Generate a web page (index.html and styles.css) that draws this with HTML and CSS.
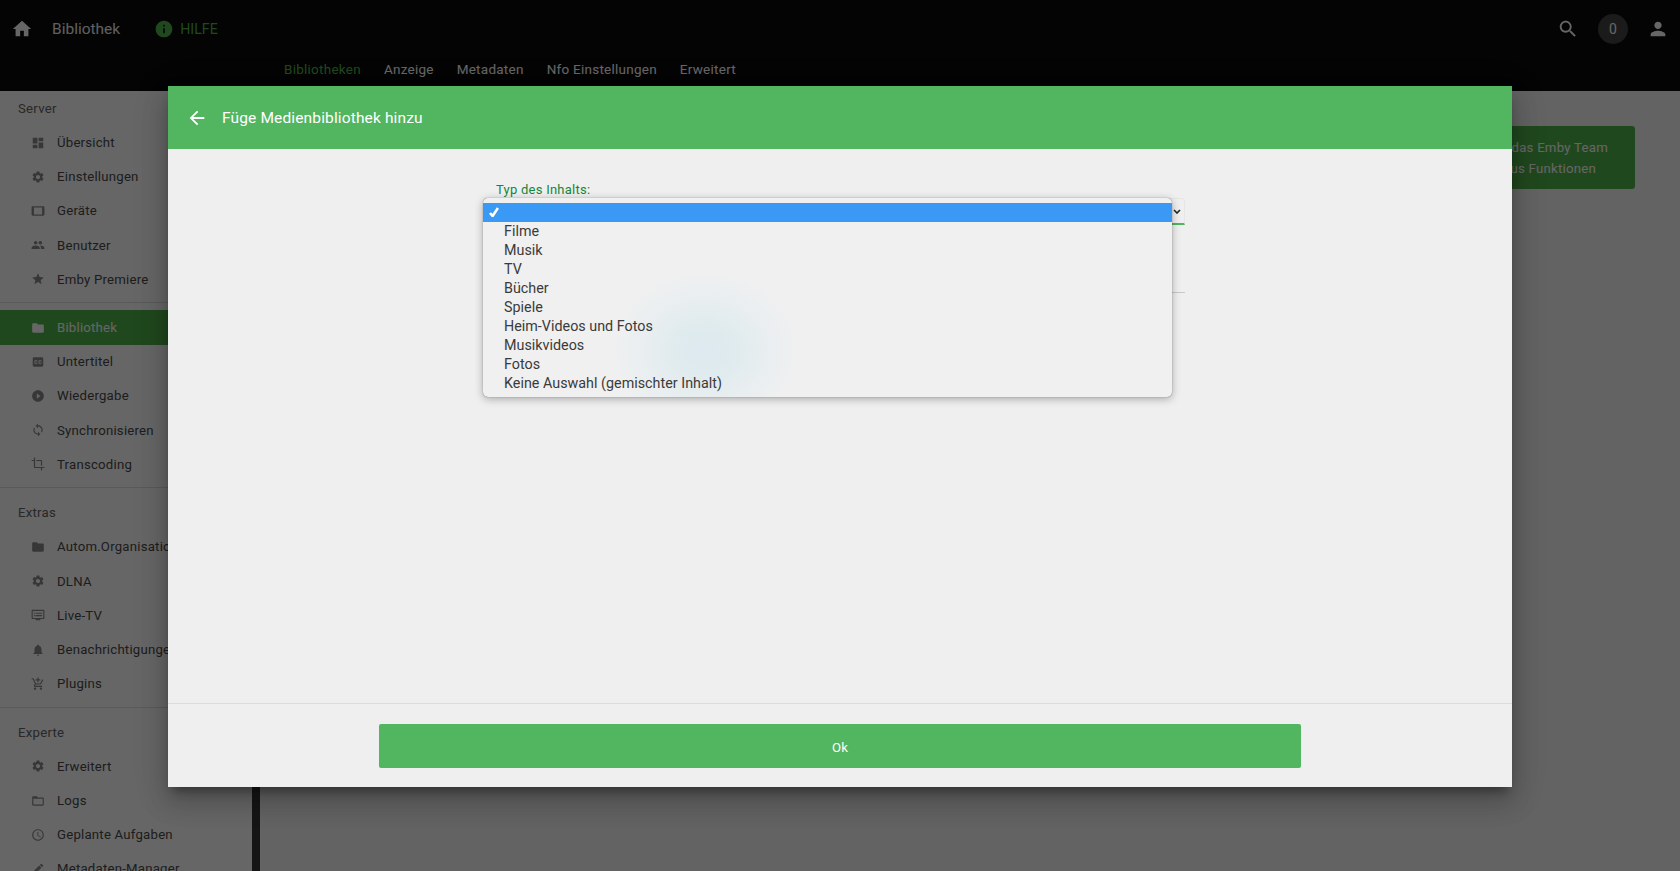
FILE: index.html
```html
<!DOCTYPE html>
<html lang="de">
<head>
<meta charset="utf-8">
<title>Bibliothek</title>
<link rel="stylesheet" href="styles.css">
</head>
<body>
<div class="app">
  <header class="topbar">
    <div class="topbar-row">
      <svg class="top-icon home" viewBox="0 0 24 24"><path d="M10 20v-6h4v6h5v-8h3L12 3 2 12h3v8z"/></svg>
      <span class="top-title">Bibliothek</span>
      <svg class="top-icon info" viewBox="0 0 24 24"><path d="M12 2C6.48 2 2 6.48 2 12s4.48 10 10 10 10-4.48 10-10S17.52 2 12 2zm1 15h-2v-6h2v6zm0-8h-2V7h2v2z"/></svg>
      <span class="top-help">HILFE</span>
      <span class="top-spacer"></span>
      <svg class="top-icon search" viewBox="0 0 24 24"><path d="M15.5 14h-.79l-.28-.27C15.41 12.59 16 11.11 16 9.5 16 5.91 13.09 3 9.5 3S3 5.91 3 9.5 5.91 16 9.5 16c1.61 0 3.09-.59 4.23-1.57l.27.28v.79l5 4.99L20.49 19l-4.99-5zm-6 0C7.01 14 5 11.99 5 9.5S7.01 5 9.5 5 14 7.01 14 9.5 11.99 14 9.5 14z"/></svg>
      <span class="badge">0</span>
      <svg class="top-icon person" viewBox="0 0 24 24"><path d="M12 12c2.21 0 4-1.79 4-4s-1.79-4-4-4-4 1.79-4 4 1.79 4 4 4zm0 2c-2.67 0-8 1.34-8 4v2h16v-2c0-2.66-5.33-4-8-4z"/></svg>
    </div>
    <nav class="tabs">
      <span class="tab tab-active">Bibliotheken</span>
      <span class="tab">Anzeige</span>
      <span class="tab">Metadaten</span>
      <span class="tab">Nfo Einstellungen</span>
      <span class="tab">Erweitert</span>
    </nav>
  </header>

  <div class="main">
    <aside class="sidebar">
      <div class="side-title">Server</div>
      <div class="side-item"><svg viewBox="0 0 24 24"><path d="M3 13h8V3H3v10zm0 8h8v-6H3v6zm10 0h8V11h-8v10zm0-18v6h8V3h-8z"/></svg><span>Übersicht</span></div>
      <div class="side-item"><svg viewBox="0 0 24 24"><path d="M19.14 12.94c.04-.3.06-.61.06-.94 0-.32-.02-.64-.07-.94l2.03-1.58c.18-.14.23-.41.12-.61l-1.92-3.32c-.12-.22-.37-.29-.59-.22l-2.39.96c-.5-.38-1.03-.7-1.62-.94l-.36-2.54c-.04-.24-.24-.41-.48-.41h-3.84c-.24 0-.43.17-.47.41l-.36 2.54c-.59.24-1.13.57-1.62.94l-2.39-.96c-.22-.08-.47 0-.59.22L2.74 8.87c-.12.21-.08.47.12.61l2.03 1.58c-.05.3-.09.63-.09.94s.02.64.07.94l-2.03 1.58c-.18.14-.23.41-.12.61l1.92 3.32c.12.22.37.29.59.22l2.39-.96c.5.38 1.03.7 1.62.94l.36 2.54c.05.24.24.41.48.41h3.84c.24 0 .44-.17.47-.41l.36-2.54c.59-.24 1.13-.56 1.62-.94l2.39.96c.22.08.47 0 .59-.22l1.92-3.32c.12-.22.07-.47-.12-.61l-2.01-1.58zM12 15.6c-1.98 0-3.6-1.62-3.6-3.6s1.62-3.6 3.6-3.6 3.6 1.62 3.6 3.6-1.62 3.6-3.6 3.6z"/></svg><span>Einstellungen</span></div>
      <div class="side-item"><svg viewBox="0 0 24 24"><path d="M21 4H3c-1.1 0-2 .9-2 2v12c0 1.1.9 2 2 2h18c1.1 0 2-.9 2-2V6c0-1.1-.9-2-2-2zm-2 14H5V6h14v12z"/></svg><span>Geräte</span></div>
      <div class="side-item"><svg viewBox="0 0 24 24"><path d="M16 11c1.66 0 2.99-1.34 2.99-3S17.66 5 16 5c-1.66 0-3 1.34-3 3s1.34 3 3 3zm-8 0c1.66 0 2.99-1.34 2.99-3S9.66 5 8 5C6.34 5 5 6.34 5 8s1.34 3 3 3zm0 2c-2.33 0-7 1.17-7 3.5V19h14v-2.5c0-2.33-4.67-3.5-7-3.5zm8 0c-.29 0-.62.02-.97.05 1.16.84 1.97 1.97 1.97 3.45V19h6v-2.5c0-2.33-4.67-3.5-7-3.5z"/></svg><span>Benutzer</span></div>
      <div class="side-item"><svg viewBox="0 0 24 24"><path d="M12 17.27L18.18 21l-1.64-7.03L22 9.24l-7.19-.61L12 2 9.19 8.63 2 9.24l5.46 4.73L5.82 21z"/></svg><span>Emby Premiere</span></div>
      <div class="side-divider"></div>
      <div class="side-item side-item-active"><svg viewBox="0 0 24 24"><path d="M10 4H4c-1.1 0-1.99.9-1.99 2L2 18c0 1.1.9 2 2 2h16c1.1 0 2-.9 2-2V8c0-1.1-.9-2-2-2h-8l-2-2z"/></svg><span>Bibliothek</span></div>
      <div class="side-item"><svg viewBox="0 0 24 24"><path d="M19 4H5c-1.11 0-2 .9-2 2v12c0 1.1.89 2 2 2h14c1.1 0 2-.9 2-2V6c0-1.1-.9-2-2-2zm-8 7H9.5v-.5h-2v3h2V13H11v1c0 .55-.45 1-1 1H7c-.55 0-1-.45-1-1v-4c0-.55.45-1 1-1h3c.55 0 1 .45 1 1v1zm7 0h-1.5v-.5h-2v3h2V13H18v1c0 .55-.45 1-1 1h-3c-.55 0-1-.45-1-1v-4c0-.55.45-1 1-1h3c.55 0 1 .45 1 1v1z"/></svg><span>Untertitel</span></div>
      <div class="side-item"><svg viewBox="0 0 24 24"><path d="M12 2C6.48 2 2 6.48 2 12s4.48 10 10 10 10-4.48 10-10S17.52 2 12 2zm-2 14.5v-9l6 4.5-6 4.5z"/></svg><span>Wiedergabe</span></div>
      <div class="side-item"><svg viewBox="0 0 24 24"><path d="M12 4V1L8 5l4 4V6c3.31 0 6 2.69 6 6 0 1.01-.25 1.97-.7 2.8l1.46 1.46C19.54 15.03 20 13.57 20 12c0-4.42-3.58-8-8-8zm0 14c-3.31 0-6-2.69-6-6 0-1.01.25-1.97.7-2.8L5.24 7.74C4.46 8.97 4 10.43 4 12c0 4.42 3.58 8 8 8v3l4-4-4-4v3z"/></svg><span>Synchronisieren</span></div>
      <div class="side-item"><svg viewBox="0 0 24 24"><path d="M17 15h2V7c0-1.1-.9-2-2-2H9v2h8v8zM7 17V1H5v4H1v2h4v10c0 1.1.9 2 2 2h10v4h2v-4h4v-2H7z"/></svg><span>Transcoding</span></div>
      <div class="side-divider"></div>
      <div class="side-title">Extras</div>
      <div class="side-item"><svg viewBox="0 0 24 24"><path d="M10 4H4c-1.1 0-1.99.9-1.99 2L2 18c0 1.1.9 2 2 2h16c1.1 0 2-.9 2-2V8c0-1.1-.9-2-2-2h-8l-2-2z"/></svg><span>Autom.Organisation</span></div>
      <div class="side-item"><svg viewBox="0 0 24 24"><path d="M19.14 12.94c.04-.3.06-.61.06-.94 0-.32-.02-.64-.07-.94l2.03-1.58c.18-.14.23-.41.12-.61l-1.92-3.32c-.12-.22-.37-.29-.59-.22l-2.39.96c-.5-.38-1.03-.7-1.62-.94l-.36-2.54c-.04-.24-.24-.41-.48-.41h-3.84c-.24 0-.43.17-.47.41l-.36 2.54c-.59.24-1.13.57-1.62.94l-2.39-.96c-.22-.08-.47 0-.59.22L2.74 8.87c-.12.21-.08.47.12.61l2.03 1.58c-.05.3-.09.63-.09.94s.02.64.07.94l-2.03 1.58c-.18.14-.23.41-.12.61l1.92 3.32c.12.22.37.29.59.22l2.39-.96c.5.38 1.03.7 1.62.94l.36 2.54c.05.24.24.41.48.41h3.84c.24 0 .44-.17.47-.41l.36-2.54c.59-.24 1.13-.56 1.62-.94l2.39.96c.22.08.47 0 .59-.22l1.92-3.32c.12-.22.07-.47-.12-.61l-2.01-1.58zM12 15.6c-1.98 0-3.6-1.62-3.6-3.6s1.62-3.6 3.6-3.6 3.6 1.62 3.6 3.6-1.62 3.6-3.6 3.6z"/></svg><span>DLNA</span></div>
      <div class="side-item"><svg viewBox="0 0 24 24"><path d="M21 3H3c-1.1 0-2 .9-2 2v12c0 1.1.9 2 2 2h5v2h8v-2h5c1.1 0 1.99-.9 1.99-2L23 5c0-1.1-.9-2-2-2zm0 14H3V5h18v12zm-2-9H8v2h11V8zm0 4H8v2h11v-2zM7 8H5v2h2V8zm0 4H5v2h2v-2z"/></svg><span>Live-TV</span></div>
      <div class="side-item"><svg viewBox="0 0 24 24"><path d="M12 22c1.1 0 2-.9 2-2h-4c0 1.1.89 2 2 2zm6-6v-5c0-3.07-1.64-5.64-4.5-6.32V4c0-.83-.67-1.5-1.5-1.5s-1.5.67-1.5 1.5v.68C7.63 5.36 6 7.92 6 11v5l-2 2v1h16v-1l-2-2z"/></svg><span>Benachrichtigungen</span></div>
      <div class="side-item"><svg viewBox="0 0 24 24"><path d="M11 9h2V6h3V4h-3V1h-2v3H8v2h3v3zm-4 9c-1.1 0-1.99.9-1.99 2S5.9 22 7 22s2-.9 2-2-.9-2-2-2zm10 0c-1.1 0-1.99.9-1.99 2s.89 2 1.99 2 2-.9 2-2-.9-2-2-2zm-9.83-3.25l.03-.12.9-1.63h7.45c.75 0 1.41-.41 1.75-1.03l3.86-7.01L19.42 4h-.01l-1.1 2-2.76 5H8.53l-.13-.27L6.16 6l-.95-2-.94-2H1v2h2l3.6 7.59-1.35 2.45c-.16.28-.25.61-.25.96 0 1.1.9 2 2 2h12v-2H7.42c-.13 0-.25-.11-.25-.25z"/></svg><span>Plugins</span></div>
      <div class="side-divider"></div>
      <div class="side-title">Experte</div>
      <div class="side-item"><svg viewBox="0 0 24 24"><path d="M19.14 12.94c.04-.3.06-.61.06-.94 0-.32-.02-.64-.07-.94l2.03-1.58c.18-.14.23-.41.12-.61l-1.92-3.32c-.12-.22-.37-.29-.59-.22l-2.39.96c-.5-.38-1.03-.7-1.62-.94l-.36-2.54c-.04-.24-.24-.41-.48-.41h-3.84c-.24 0-.43.17-.47.41l-.36 2.54c-.59.24-1.13.57-1.62.94l-2.39-.96c-.22-.08-.47 0-.59.22L2.74 8.87c-.12.21-.08.47.12.61l2.03 1.58c-.05.3-.09.63-.09.94s.02.64.07.94l-2.03 1.58c-.18.14-.23.41-.12.61l1.92 3.32c.12.22.37.29.59.22l2.39-.96c.5.38 1.03.7 1.62.94l.36 2.54c.05.24.24.41.48.41h3.84c.24 0 .44-.17.47-.41l.36-2.54c.59-.24 1.13-.56 1.62-.94l2.39.96c.22.08.47 0 .59-.22l1.92-3.32c.12-.22.07-.47-.12-.61l-2.01-1.58zM12 15.6c-1.98 0-3.6-1.62-3.6-3.6s1.62-3.6 3.6-3.6 3.6 1.62 3.6 3.6-1.62 3.6-3.6 3.6z"/></svg><span>Erweitert</span></div>
      <div class="side-item"><svg viewBox="0 0 24 24"><path d="M20 6h-8l-2-2H4c-1.1 0-1.99.9-1.99 2L2 18c0 1.1.9 2 2 2h16c1.1 0 2-.9 2-2V8c0-1.1-.9-2-2-2zm0 12H4V8h16v10z"/></svg><span>Logs</span></div>
      <div class="side-item"><svg viewBox="0 0 24 24"><path d="M11.99 2C6.47 2 2 6.48 2 12s4.47 10 9.99 10C17.52 22 22 17.52 22 12S17.52 2 11.99 2zM12 20c-4.42 0-8-3.58-8-8s3.58-8 8-8 8 3.58 8 8-3.58 8-8 8zm.5-13H11v6l5.25 3.15.75-1.23-4.5-2.67z"/></svg><span>Geplante Aufgaben</span></div>
      <div class="side-item"><svg viewBox="0 0 24 24"><path d="M3 17.25V21h3.75L17.81 9.94l-3.75-3.75L3 17.25zM20.71 7.04c.39-.39.39-1.02 0-1.41l-2.34-2.34c-.39-.39-1.02-.39-1.41 0l-1.83 1.83 3.75 3.75 1.83-1.83z"/></svg><span>Metadaten-Manager</span></div>
    </aside>
    <div class="side-scrollbar"></div>
    <main class="content">
      <div class="promo">
        <div class="promo-line promo-line-one">Unterstütze das Emby Team</div>
        <div class="promo-line promo-line-two">Bonus Funktionen</div>
      </div>
    </main>
  </div>
</div>

<div class="scrim"></div>

<section class="dialog">
  <div class="dialog-head">
    <svg class="dialog-back" viewBox="0 0 24 24"><path d="M20 11H7.83l5.59-5.59L12 4l-8 8 8 8 1.41-1.41L7.83 13H20v-2z"/></svg>
    <span class="dialog-title">Füge Medienbibliothek hinzu</span>
  </div>
  <div class="dialog-body">
    <div class="field-label">Typ des Inhalts:</div>
    <div class="select-box">
      <svg class="select-chevron" viewBox="0 0 8 5"><path d="M1 1l3 3 3-3"/></svg>
    </div>
    <div class="field-line"></div>
  </div>
  <div class="dialog-foot">
    <div class="ok-button">Ok</div>
  </div>
  <div class="popup">
    <div class="popup-row popup-row-selected"><svg class="popup-check" viewBox="0 0 10 10"><path d="M1 6l2.6 3L9 1"/></svg></div>
    <div class="popup-row">Filme</div>
    <div class="popup-row">Musik</div>
    <div class="popup-row">TV</div>
    <div class="popup-row">Bücher</div>
    <div class="popup-row">Spiele</div>
    <div class="popup-row">Heim-Videos und Fotos</div>
    <div class="popup-row">Musikvideos</div>
    <div class="popup-row">Fotos</div>
    <div class="popup-row">Keine Auswahl (gemischter Inhalt)</div>
  </div>
</section>
</body>
</html>
```
FILE: styles.css
```css
* { box-sizing: border-box; }

html, body {
  margin: 0;
  height: 100%;
  overflow: hidden;
}

body {
  font-family: Roboto, "Liberation Sans", sans-serif;
  background: #fff;
  position: relative;
}

.app {
  height: 871px;
  display: flex;
  flex-direction: column;
}

.topbar {
  height: 91px;
  background: #0a0a0a;
  color: #fff;
  flex: none;
}

.topbar-row {
  height: 58px;
  display: flex;
  align-items: center;
  padding-left: 11px;
}

.top-icon { fill: #fff; display: block; flex: none; }
.home { width: 22px; height: 22px; }
.top-title { margin-left: 19px; font-size: 15.5px; color: #eee; }
.info { width: 20px; height: 20px; margin-left: 34px; fill: #52b54b; }
.top-help { margin-left: 6px; font-size: 14.2px; color: #52b54b; }
.top-spacer { flex: 1; }
.search { width: 22px; height: 22px; }
.badge {
  width: 30px;
  height: 30px;
  margin-left: 19px;
  border-radius: 50%;
  background: #444;
  display: flex;
  align-items: center;
  justify-content: center;
  font-size: 14px;
}
.person { width: 22px; height: 22px; margin: 0 11px 0 19px; }

.tabs {
  display: flex;
  gap: 23px;
  padding-left: 284px;
  height: 22px;
  align-items: center;
  font-size: 13.5px;
  font-weight: 400;
  letter-spacing: .25px;
}
.tab { color: #fff; }
.tab-active { color: #52b54b; }

.main {
  flex: 1;
  min-height: 0;
  display: flex;
}

.sidebar {
  width: 252px;
  flex: none;
  background: #fff;
  overflow: hidden;
}

.side-title {
  height: 34.5px;
  padding-left: 18px;
  display: flex;
  align-items: center;
  font-size: 13.2px;
  letter-spacing: .25px;
  color: #666;
}

.side-item {
  height: 34.2px;
  padding-left: 31px;
  display: flex;
  align-items: center;
  gap: 12px;
  font-size: 13.2px;
  letter-spacing: .22px;
  color: #4a4a4a;
  white-space: nowrap;
}
.side-item svg {
  width: 14px;
  height: 14px;
  flex: none;
  fill: #8a8a8a;
}
.side-item-active {
  background: #52b54b;
  color: #fff;
}
.side-item-active svg { fill: #fff; }

.side-divider {
  height: 1px;
  margin: 6px 0 7px;
  background: #e0e0e0;
}

.side-scrollbar {
  width: 8px;
  flex: none;
  background: #383838;
}

.content {
  flex: 1;
  background: #f8f8f8;
  padding: 35px 45px 0 0;
}

.promo {
  width: 320px;
  height: 63px;
  margin-left: auto;
  padding-top: 11px;
  border-radius: 3px;
  background: #52b54b;
  color: #fff;
  font-size: 13.2px;
  letter-spacing: .25px;
  line-height: 21px;
  text-align: right;
}
.promo-line-one { padding-right: 27px; }
.promo-line-two { padding-right: 39px; }

.scrim {
  position: absolute;
  inset: 0;
  background: rgba(0, 0, 0, .6);
}

.dialog {
  position: absolute;
  left: 168px;
  top: 86px;
  width: 1344px;
  height: 701px;
  display: flex;
  flex-direction: column;
  background: #efefef;
  box-shadow: 0 16px 24px 2px rgba(0,0,0,.14), 0 6px 30px 5px rgba(0,0,0,.12), 0 8px 10px -5px rgba(0,0,0,.4);
}

.dialog-head {
  height: 63px;
  flex: none;
  background: #52b55f;
  color: #fff;
  display: flex;
  align-items: center;
  padding-left: 18px;
}
.dialog-back { width: 22px; height: 22px; fill: #fff; flex: none; }
.dialog-title { margin-left: 14px; font-size: 15.5px; font-weight: 400; letter-spacing: .14px; }

.dialog-body {
  flex: 1;
  padding: 33px 327px 0 316px;
}
.field-label {
  height: 16px;
  padding-left: 12px;
  font-size: 13px;
  line-height: 16px;
  letter-spacing: .25px;
  color: #15863a;
}
.select-box {
  height: 27px;
  border-bottom: 2px solid #52b55f;
  border-top: 1px solid #e6e6e6;
  border-right: 1px solid #e6e6e6;
  border-top-right-radius: 4px;
  display: flex;
  align-items: center;
  justify-content: flex-end;
  padding-right: 3px;
}
.select-chevron { width: 8px; height: 5px; fill: none; stroke: #222; stroke-width: 1.6; }
.field-line {
  height: 1px;
  margin-top: 67px;
  background: #c8c8c8;
}

.dialog-foot {
  height: 84px;
  flex: none;
  border-top: 1px solid #dcdcdc;
  padding-top: 20px;
}
.ok-button {
  width: 922px;
  height: 44px;
  margin: 0 auto;
  border-radius: 2px;
  background: #52b55f;
  color: #fff;
  display: flex;
  align-items: center;
  justify-content: center;
  padding-top: 2px;
  font-size: 13.2px;
  font-weight: 400;
}

.popup {
  position: absolute;
  left: 315px;
  top: 112px;
  width: 689px;
  height: 199px;
  padding-top: 5px;
  border-radius: 5px;
  background: radial-gradient(ellipse 95px 80px at 222px 152px, #dce9ee 0%, #dfebee 30%, #e9eef0 65%, #f0f0f0 100%), #f0f0f0;
  box-shadow: 0 0 1px rgba(0,0,0,.55), 0 2px 9px rgba(0,0,0,.3);
  overflow: hidden;
}
.popup-row {
  height: 19px;
  padding-left: 21px;
  font-size: 14.3px;
  line-height: 19px;
  letter-spacing: .02px;
  color: #3a3a3a;
  white-space: nowrap;
}
.popup-row-selected {
  background: #3a99f5;
  padding-left: 6px;
  padding-bottom: 2px;
  display: flex;
  align-items: center;
}
.popup-check { width: 10px; height: 10px; fill: none; stroke: #fff; stroke-width: 2.6; }
```
